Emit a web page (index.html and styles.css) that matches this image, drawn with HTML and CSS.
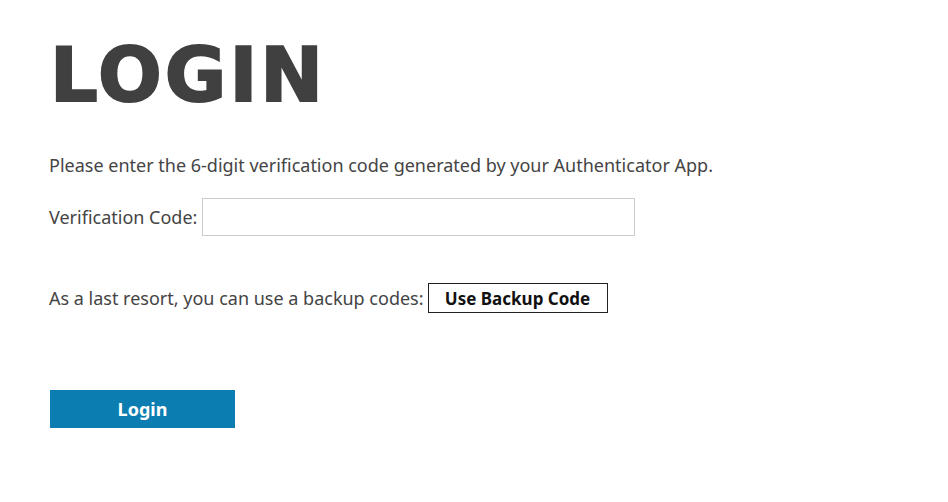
FILE: index.html
```html
<!DOCTYPE html>
<html lang="en">
<head>
  <meta charset="UTF-8">
  <meta name="viewport" content="width=device-width, initial-scale=1.0">
  <title>Login</title>
  <link rel="stylesheet" href="styles.css">
</head>
<body>
  <h1 class="titulo">LOGIN</h1>
  <p class="intro">Please enter the 6-digit verification code generated by your Authenticator App.</p>
  <div class="fila">
    <label for="code">Verification Code:</label>
    <input id="code" class="campo" type="text">
  </div>
  <div class="fila backup">
    <span>As a last resort, you can use a backup codes:</span>
    <button class="backup-btn">Use Backup Code</button>
  </div>
  <button class="login-btn">Login</button>
</body>
</html>
```

FILE: styles.css
```css
body {
  font-family: 'Noto Sans', 'Open Sans', Arial, sans-serif;
  font-size: 18px;
  color: #444;
  background-color: #fff;
  margin: 0;
  padding: 30px 49px;
}

.titulo {
  font-family: 'DejaVu Sans', Inter, sans-serif;
  font-weight: bold;
  font-size: 75px;
  letter-spacing: 3px;
  -webkit-text-stroke: 2px #404040;
  color: #404040;
  margin: 0 0 0 1px;
  line-height: 90px;
}

.intro {
  margin: 33px 0 0;
  line-height: 24px;
}

.fila {
  display: flex;
  align-items: center;
  gap: 5px;
  margin-top: 21px;
}

.campo {
  width: 433px;
  height: 38px;
  box-sizing: border-box;
  border: 1px solid #ccc;
  padding: 0 8px;
  font: inherit;
}

.backup {
  margin-top: 47px;
  gap: 4px;
}

.backup-btn {
  font: inherit;
  font-size: 17px;
  font-weight: bold;
  color: #111;
  background: #fff;
  border: 1px solid #222;
  height: 30px;
  width: 180px;
  padding: 0;
  cursor: pointer;
}

.login-btn {
  display: block;
  margin: 77px 0 0 1px;
  width: 185px;
  height: 38px;
  background-color: #0c7db1;
  color: #fff;
  border: none;
  font: inherit;
  font-weight: bold;
  cursor: pointer;
}
```
